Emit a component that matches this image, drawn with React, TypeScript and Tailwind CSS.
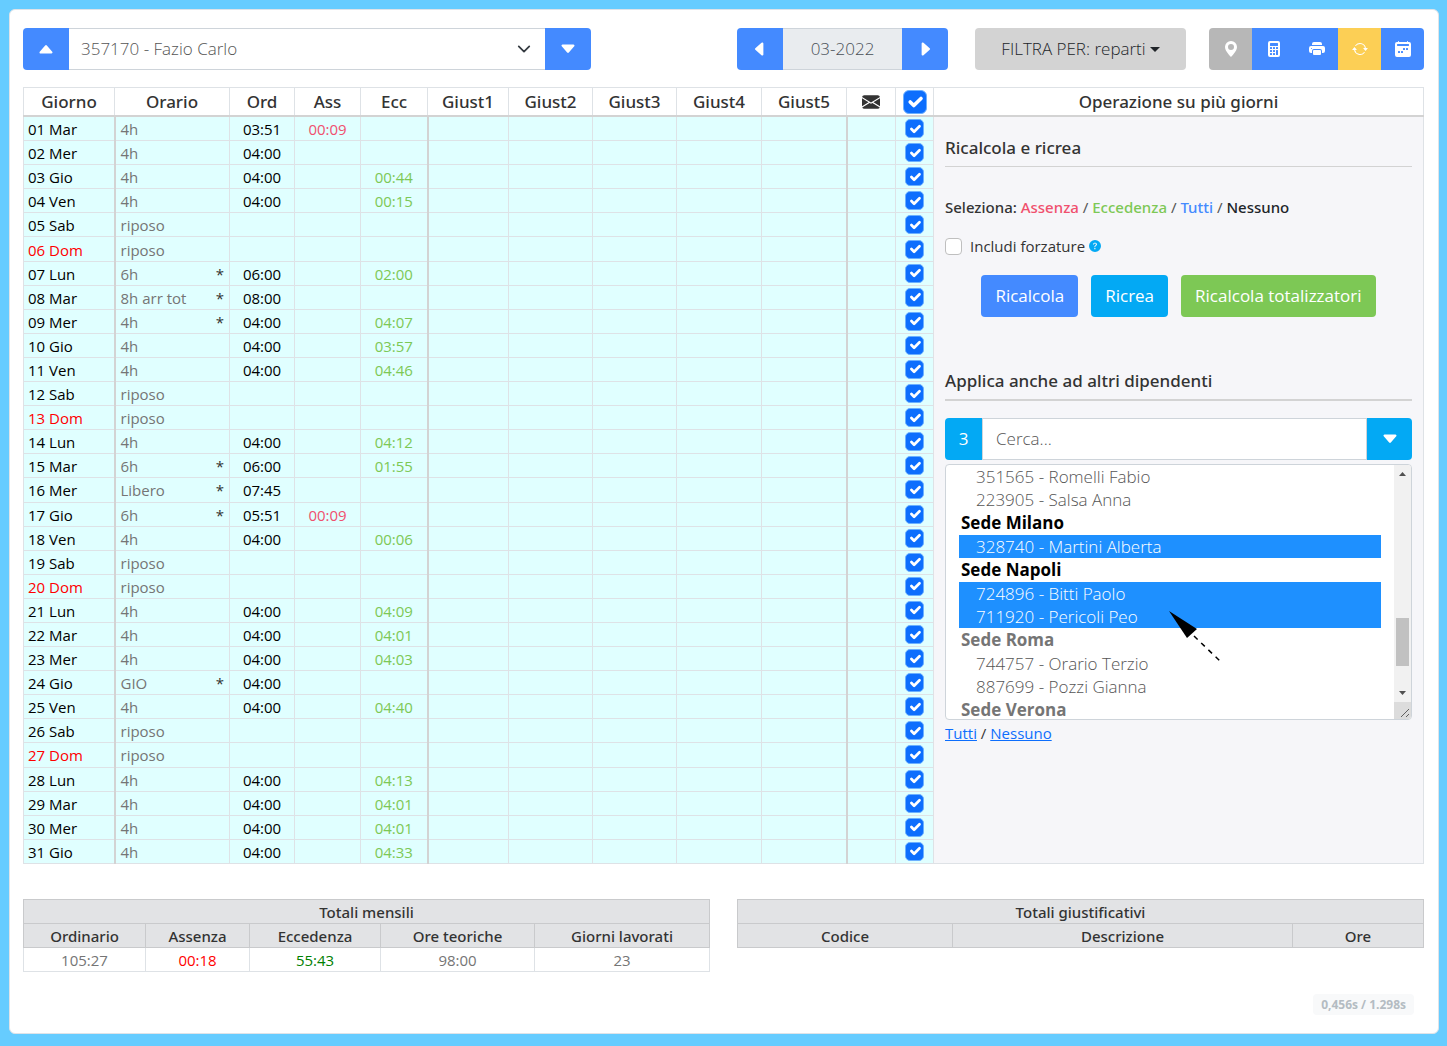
import { ReactNode } from "react";
import {
  BsArrowRepeat,
  BsCalculatorFill,
  BsCalendar2WeekFill,
  BsCaretDownFill,
  BsCaretLeftFill,
  BsCaretRightFill,
  BsCaretUpFill,
  BsEnvelopeFill,
  BsGeoAltFill,
  BsPrinterFill,
  BsQuestionCircleFill,
} from "react-icons/bs";

type Giorno = {
  giorno: string;
  orario: string;
  ord?: string;
  ass?: string;
  ecc?: string;
  star?: boolean;
};

const giorni: Giorno[] = [
  { giorno: "01 Mar", orario: "4h", ord: "03:51", ass: "00:09" },
  { giorno: "02 Mer", orario: "4h", ord: "04:00" },
  { giorno: "03 Gio", orario: "4h", ord: "04:00", ecc: "00:44" },
  { giorno: "04 Ven", orario: "4h", ord: "04:00", ecc: "00:15" },
  { giorno: "05 Sab", orario: "riposo" },
  { giorno: "06 Dom", orario: "riposo" },
  { giorno: "07 Lun", orario: "6h", star: true, ord: "06:00", ecc: "02:00" },
  { giorno: "08 Mar", orario: "8h arr tot", star: true, ord: "08:00" },
  { giorno: "09 Mer", orario: "4h", star: true, ord: "04:00", ecc: "04:07" },
  { giorno: "10 Gio", orario: "4h", ord: "04:00", ecc: "03:57" },
  { giorno: "11 Ven", orario: "4h", ord: "04:00", ecc: "04:46" },
  { giorno: "12 Sab", orario: "riposo" },
  { giorno: "13 Dom", orario: "riposo" },
  { giorno: "14 Lun", orario: "4h", ord: "04:00", ecc: "04:12" },
  { giorno: "15 Mar", orario: "6h", star: true, ord: "06:00", ecc: "01:55" },
  { giorno: "16 Mer", orario: "Libero", star: true, ord: "07:45" },
  { giorno: "17 Gio", orario: "6h", star: true, ord: "05:51", ass: "00:09" },
  { giorno: "18 Ven", orario: "4h", ord: "04:00", ecc: "00:06" },
  { giorno: "19 Sab", orario: "riposo" },
  { giorno: "20 Dom", orario: "riposo" },
  { giorno: "21 Lun", orario: "4h", ord: "04:00", ecc: "04:09" },
  { giorno: "22 Mar", orario: "4h", ord: "04:00", ecc: "04:01" },
  { giorno: "23 Mer", orario: "4h", ord: "04:00", ecc: "04:03" },
  { giorno: "24 Gio", orario: "GIO", star: true, ord: "04:00" },
  { giorno: "25 Ven", orario: "4h", ord: "04:00", ecc: "04:40" },
  { giorno: "26 Sab", orario: "riposo" },
  { giorno: "27 Dom", orario: "riposo" },
  { giorno: "28 Lun", orario: "4h", ord: "04:00", ecc: "04:13" },
  { giorno: "29 Mar", orario: "4h", ord: "04:00", ecc: "04:01" },
  { giorno: "30 Mer", orario: "4h", ord: "04:00", ecc: "04:01" },
  { giorno: "31 Gio", orario: "4h", ord: "04:00", ecc: "04:33" },
];

const dipendenti = [
  { label: "351565 - Romelli Fabio" },
  { label: "223905 - Salsa Anna" },
  { label: "Sede Milano", sede: true, attiva: true },
  { label: "328740 - Martini Alberta", selected: true },
  { label: "Sede Napoli", sede: true, attiva: true },
  { label: "724896 - Bitti Paolo", selected: true },
  { label: "711920 - Pericoli Peo", selected: true },
  { label: "Sede Roma", sede: true },
  { label: "744757 - Orario Terzio" },
  { label: "887699 - Pozzi Gianna" },
  { label: "Sede Verona", sede: true },
];

function CheckBox({ label, big }: { label: string; big?: boolean }) {
  return (
    <span className="grid place-items-center">
      <input
        type="checkbox"
        defaultChecked
        aria-label={label}
        className={`peer col-start-1 row-start-1 appearance-none border border-[#6cb0ff] bg-[#0d6efd] ${
          big ? "size-6 rounded-md" : "size-[19px] rounded-[5px]"
        }`}
      />
      <svg
        viewBox="0 0 20 20"
        className={`pointer-events-none invisible col-start-1 row-start-1 peer-checked:visible ${big ? "size-6" : "size-[18px]"}`}
        fill="none"
        stroke="#fff"
        strokeWidth="3"
        strokeLinecap="round"
        strokeLinejoin="round"
      >
        <path d="m6 10 3 3 6-6" />
      </svg>
    </span>
  );
}

function Th({ children }: { children: ReactNode }) {
  return (
    <th className="border border-b-2 border-[#dee2e6] border-b-[#d3d3d3] bg-white p-0 font-['Noto_Sans',sans-serif] font-medium">
      {children}
    </th>
  );
}

function Toolbar() {
  return (
    <div className="flex h-[42px] items-stretch text-[17px]">
      <div className="flex w-[568px]">
        <button aria-label="Precedente" className="flex w-[46px] items-center justify-center rounded-l bg-[#448aff] text-white">
          <BsCaretUpFill className="size-[18px]" />
        </button>
        <div className="grid flex-1">
          <select
            aria-label="Dipendente"
            className="col-start-1 row-start-1 appearance-none border-y border-[#ced4da] bg-white px-3 font-light text-[#555]"
          >
            <option>357170 - Fazio Carlo</option>
          </select>
          <svg
            viewBox="0 0 16 16"
            className="pointer-events-none col-start-1 row-start-1 mr-3.5 size-3.5 self-center justify-self-end"
            fill="none"
            stroke="#343a40"
            strokeWidth="2"
            strokeLinecap="round"
            strokeLinejoin="round"
          >
            <path d="m2 5 6 6 6-6" />
          </svg>
        </div>
        <button aria-label="Successivo" className="flex w-[46px] items-center justify-center rounded-r bg-[#448aff] text-white">
          <BsCaretDownFill className="size-[18px]" />
        </button>
      </div>

      <div className="ml-auto flex w-[211px]">
        <button aria-label="Mese precedente" className="flex w-[46px] items-center justify-center rounded-l bg-[#448aff] text-white">
          <BsCaretLeftFill className="size-[18px]" />
        </button>
        <input
          aria-label="Mese"
          defaultValue="03-2022"
          className="min-w-0 flex-1 border-y border-[#ced4da] bg-[#e9ecef] text-center font-light text-[#495057]"
        />
        <button aria-label="Mese successivo" className="flex w-[46px] items-center justify-center rounded-r bg-[#448aff] text-white">
          <BsCaretRightFill className="size-[18px]" />
        </button>
      </div>

      <button className="ml-[27px] flex w-[211px] items-center justify-center gap-1 rounded bg-[#d3d3d3] font-light text-[#212529]">
        FILTRA PER: reparti
        <svg viewBox="0 0 10 5" className="h-[5px] w-2.5">
          <path d="M0 0h10L5 5z" fill="currentColor" />
        </svg>
      </button>

      <div className="ml-[23px] flex w-[215px] overflow-hidden rounded text-white">
        <button aria-label="Posizione" className="flex flex-1 items-center justify-center bg-[#b7b7b7]">
          <BsGeoAltFill className="size-4" />
        </button>
        <button aria-label="Calcola" className="flex flex-1 items-center justify-center bg-[#448aff]">
          <BsCalculatorFill className="size-4" />
        </button>
        <button aria-label="Stampa" className="flex flex-1 items-center justify-center bg-[#448aff]">
          <BsPrinterFill className="size-4" />
        </button>
        <button aria-label="Aggiorna" className="flex flex-1 items-center justify-center bg-[#fccf55]">
          <BsArrowRepeat className="size-4" />
        </button>
        <button aria-label="Calendario" className="flex flex-1 items-center justify-center bg-[#448aff]">
          <BsCalendar2WeekFill className="size-4" />
        </button>
      </div>
    </div>
  );
}

function EmployeeList() {
  return (
    <div className="mt-1 flex h-[256px] overflow-hidden rounded border border-[#ced4da] bg-white">
      <ul role="listbox" aria-label="Dipendenti" aria-multiselectable="true" className="min-w-0 flex-1 overflow-hidden px-[13px] text-[17px] leading-[23px]">
        {dipendenti.map((d) => (
          <li
            key={d.label}
            role="option"
            aria-selected={!!d.selected}
            className={
              d.sede
                ? `h-6 pl-0.5 font-bold ${d.attiva ? "text-black" : "text-[#757575]"}`
                : `h-[23px] pl-[17px] font-light ${d.selected ? "bg-[#1e90ff] text-white" : "text-[#555]"}`
            }
          >
            {d.label}
          </li>
        ))}
      </ul>
      <div className="flex w-[17px] flex-col bg-[#f1f1f1]">
        <svg viewBox="0 0 17 17" className="h-[17px]" fill="#505050">
          <path d="M5 11h7L8.500 7z" />
        </svg>
        <div className="flex-1 pt-[136px]">
          <div className="mx-0.5 h-12 bg-[#c1c1c1]" />
        </div>
        <svg viewBox="0 0 17 17" className="h-[17px]" fill="#505050">
          <path d="M5 6h7L8.500 10z" />
        </svg>
        <svg viewBox="0 0 17 17" className="h-[17px] bg-[#dcdcdc]" stroke="#606060">
          <path d="M7 15l8-8M12 15l3-3" />
        </svg>
      </div>
    </div>
  );
}

function SidePanel() {
  return (
    <div className="relative min-h-[746px] px-[11px] pt-5 text-left text-[15px]">
      <h2 className="border-b border-[#d3d3d3] pb-[7px] font-['Noto_Sans',sans-serif] text-[17px] leading-[22px] font-medium">
        Ricalcola e ricrea
      </h2>

      <p className="mt-[30px] font-['Noto_Sans',sans-serif] leading-5 text-[#555]">
        <span className="font-medium text-[#333]">Seleziona:</span>{" "}
        <a href="#assenza" className="font-medium text-[#f0506e]">Assenza</a> /{" "}
        <a href="#eccedenza" className="font-medium text-[#7dc855]">Eccedenza</a> /{" "}
        <a href="#tutti" className="font-medium text-[#448aff]">Tutti</a> /{" "}
        <a href="#nessuno" className="font-medium text-[#212529]">Nessuno</a>
      </p>

      <div className="mt-[19px] flex h-5 items-center">
        <input
          id="forzature"
          type="checkbox"
          className="size-[17px] appearance-none rounded border border-[#bfbfbf] bg-white"
        />
        <label htmlFor="forzature" className="ml-2">Includi forzature</label>
        <BsQuestionCircleFill className="ml-1 size-3 text-[#03a9f4]" />
      </div>

      <div className="mt-[19px] flex justify-center gap-[13px] text-[17px] text-white">
        <button className="h-[42px] rounded bg-[#448aff] px-3.5">Ricalcola</button>
        <button className="h-[42px] rounded bg-[#03a9f4] px-3.5">Ricrea</button>
        <button className="h-[42px] rounded bg-[#7dc855] px-3.5">Ricalcola totalizzatori</button>
      </div>

      <h2 className="mt-[53px] border-b-2 border-[#d3d3d3] pb-[7px] font-['Noto_Sans',sans-serif] text-[17px] leading-[22px] font-medium">
        Applica anche ad altri dipendenti
      </h2>

      <div className="mt-[17px] flex h-[42px] text-[17px]">
        <span className="flex w-[37px] items-center justify-center rounded-l bg-[#03a9f4] text-white">3</span>
        <input
          aria-label="Cerca dipendente"
          placeholder="Cerca..."
          className="min-w-0 flex-1 border border-[#ced4da] bg-white px-[13px] font-light placeholder:text-[#555]"
        />
        <button aria-label="Apri elenco" className="flex w-[45px] items-center justify-center rounded-r bg-[#03a9f4] text-white">
          <BsCaretDownFill className="size-[18px]" />
        </button>
      </div>

      <EmployeeList />

      <p className="mt-0.5 leading-[22px]">
        <a href="#tutti" className="text-[#0d6efd] underline">Tutti</a> /{" "}
        <a href="#nessuno" className="text-[#0d6efd] underline">Nessuno</a>
      </p>

      {/* pointer laid over the list */}
      <svg viewBox="0 0 56 54" className="pointer-events-none absolute top-[493px] left-[233px] h-[54px] w-14">
        <path d="M2 1l28 18-10 9z" />
        <path d="M27 26l27 26" stroke="#000" strokeWidth="1.500" strokeDasharray="5 5" />
      </svg>
    </div>
  );
}

function Cartellino() {
  return (
    <table className="mt-[17px] w-full table-fixed border-collapse text-[15px] leading-[22px]">
      <colgroup>
        <col className="w-[91px]" />
        <col className="w-[115px]" />
        <col className="w-[65px]" />
        <col className="w-[66px]" />
        <col className="w-[67px]" />
        <col className="w-[81px]" />
        <col className="w-[84px]" />
        <col className="w-[84px]" />
        <col className="w-[85px]" />
        <col className="w-[85px]" />
        <col className="w-[49px]" />
        <col className="w-[38px]" />
        <col />
      </colgroup>
      <thead className="text-[17px] leading-[27px]">
        <tr>
          <Th>Giorno</Th>
          <Th>Orario</Th>
          <Th>Ord</Th>
          <Th>Ass</Th>
          <Th>Ecc</Th>
          <Th>Giust1</Th>
          <Th>Giust2</Th>
          <Th>Giust3</Th>
          <Th>Giust4</Th>
          <Th>Giust5</Th>
          <Th>
            <BsEnvelopeFill className="mx-auto size-[18px]" />
          </Th>
          <Th>
            <CheckBox label="Seleziona tutti i giorni" big />
          </Th>
          <Th>Operazione su più giorni</Th>
        </tr>
      </thead>
      <tbody>
        {giorni.map((g, i) => (
          <tr key={g.giorno} className="bg-[#e0ffff] *:border *:border-[#dee2e6] *:p-0 *:pt-px">
            <td className={`border-r-2! border-r-[#d3d3d3]! pl-1! ${g.giorno.endsWith("Dom") ? "text-[#f00]" : "text-black"}`}>
              {g.giorno}
            </td>
            <td className="px-[5px]! text-[#757575]">
              <div className="flex justify-between">
                <span>{g.orario}</span>
                {g.star && <span className="text-[#333]">*</span>}
              </div>
            </td>
            <td className="text-center text-black">{g.ord}</td>
            <td className="text-center text-[#f0506e]">{g.ass}</td>
            <td className="border-r-2! border-r-[#d3d3d3]! text-center text-[#7dc855]">{g.ecc}</td>
            <td></td>
            <td></td>
            <td></td>
            <td></td>
            <td className="border-r-2! border-r-[#d3d3d3]!"></td>
            <td></td>
            <td className="pt-0!">
              <CheckBox label={`Seleziona ${g.giorno}`} />
            </td>
            {i === 0 && (
              <td rowSpan={giorni.length} className="bg-[#f6f6f9] pt-0! align-top">
                <SidePanel />
              </td>
            )}
          </tr>
        ))}
      </tbody>
    </table>
  );
}

function Totali() {
  return (
    <div className="mt-[35px] grid grid-cols-2 items-start gap-[27px] text-center text-[15px] leading-[22px]">
      <table className="w-full table-fixed border-collapse">
        <colgroup>
          <col className="w-[122px]" />
          <col className="w-[104px]" />
          <col className="w-[131px]" />
          <col className="w-[154px]" />
          <col />
        </colgroup>
        <thead className="bg-[#e2e3e5] font-['Noto_Sans',sans-serif] *:*:border *:*:border-[#c9cacc] *:*:p-0 *:*:pt-px *:*:font-medium">
          <tr>
            <th colSpan={5}>Totali mensili</th>
          </tr>
          <tr>
            <th>Ordinario</th>
            <th>Assenza</th>
            <th>Eccedenza</th>
            <th>Ore teoriche</th>
            <th>Giorni lavorati</th>
          </tr>
        </thead>
        <tbody>
          <tr className="text-[#757575] *:border *:border-[#dee2e6] *:p-0 *:pt-px">
            <td>105:27</td>
            <td className="text-[#f00]">00:18</td>
            <td className="text-[#008000]">55:43</td>
            <td>98:00</td>
            <td>23</td>
          </tr>
        </tbody>
      </table>

      <table className="w-full table-fixed border-collapse">
        <colgroup>
          <col className="w-[215px]" />
          <col />
          <col className="w-[131px]" />
        </colgroup>
        <thead className="bg-[#e2e3e5] font-['Noto_Sans',sans-serif] *:*:border *:*:border-[#c9cacc] *:*:p-0 *:*:pt-px *:*:font-medium">
          <tr>
            <th colSpan={3}>Totali giustificativi</th>
          </tr>
          <tr>
            <th>Codice</th>
            <th>Descrizione</th>
            <th>Ore</th>
          </tr>
        </thead>
      </table>
    </div>
  );
}

export default function App() {
  return (
    <div className="min-h-screen bg-[#66ccff] pt-[9px] pr-2 pb-3 pl-[9px] font-['Open_Sans','Noto_Sans',sans-serif] text-[#333]">
      <main className="rounded-md border border-[#dfe3e8] bg-white pt-[18px] pr-3.5 pb-[18px] pl-[13px]">
        <Toolbar />
        <Cartellino />
        <Totali />
        <div className="mt-[22px] flex justify-end pr-2.5">
          <span className="rounded bg-[#f8f9fa] px-2 text-xs leading-[21px] font-bold text-[#b4bcc2]">0,456s / 1.298s</span>
        </div>
      </main>
    </div>
  );
}
